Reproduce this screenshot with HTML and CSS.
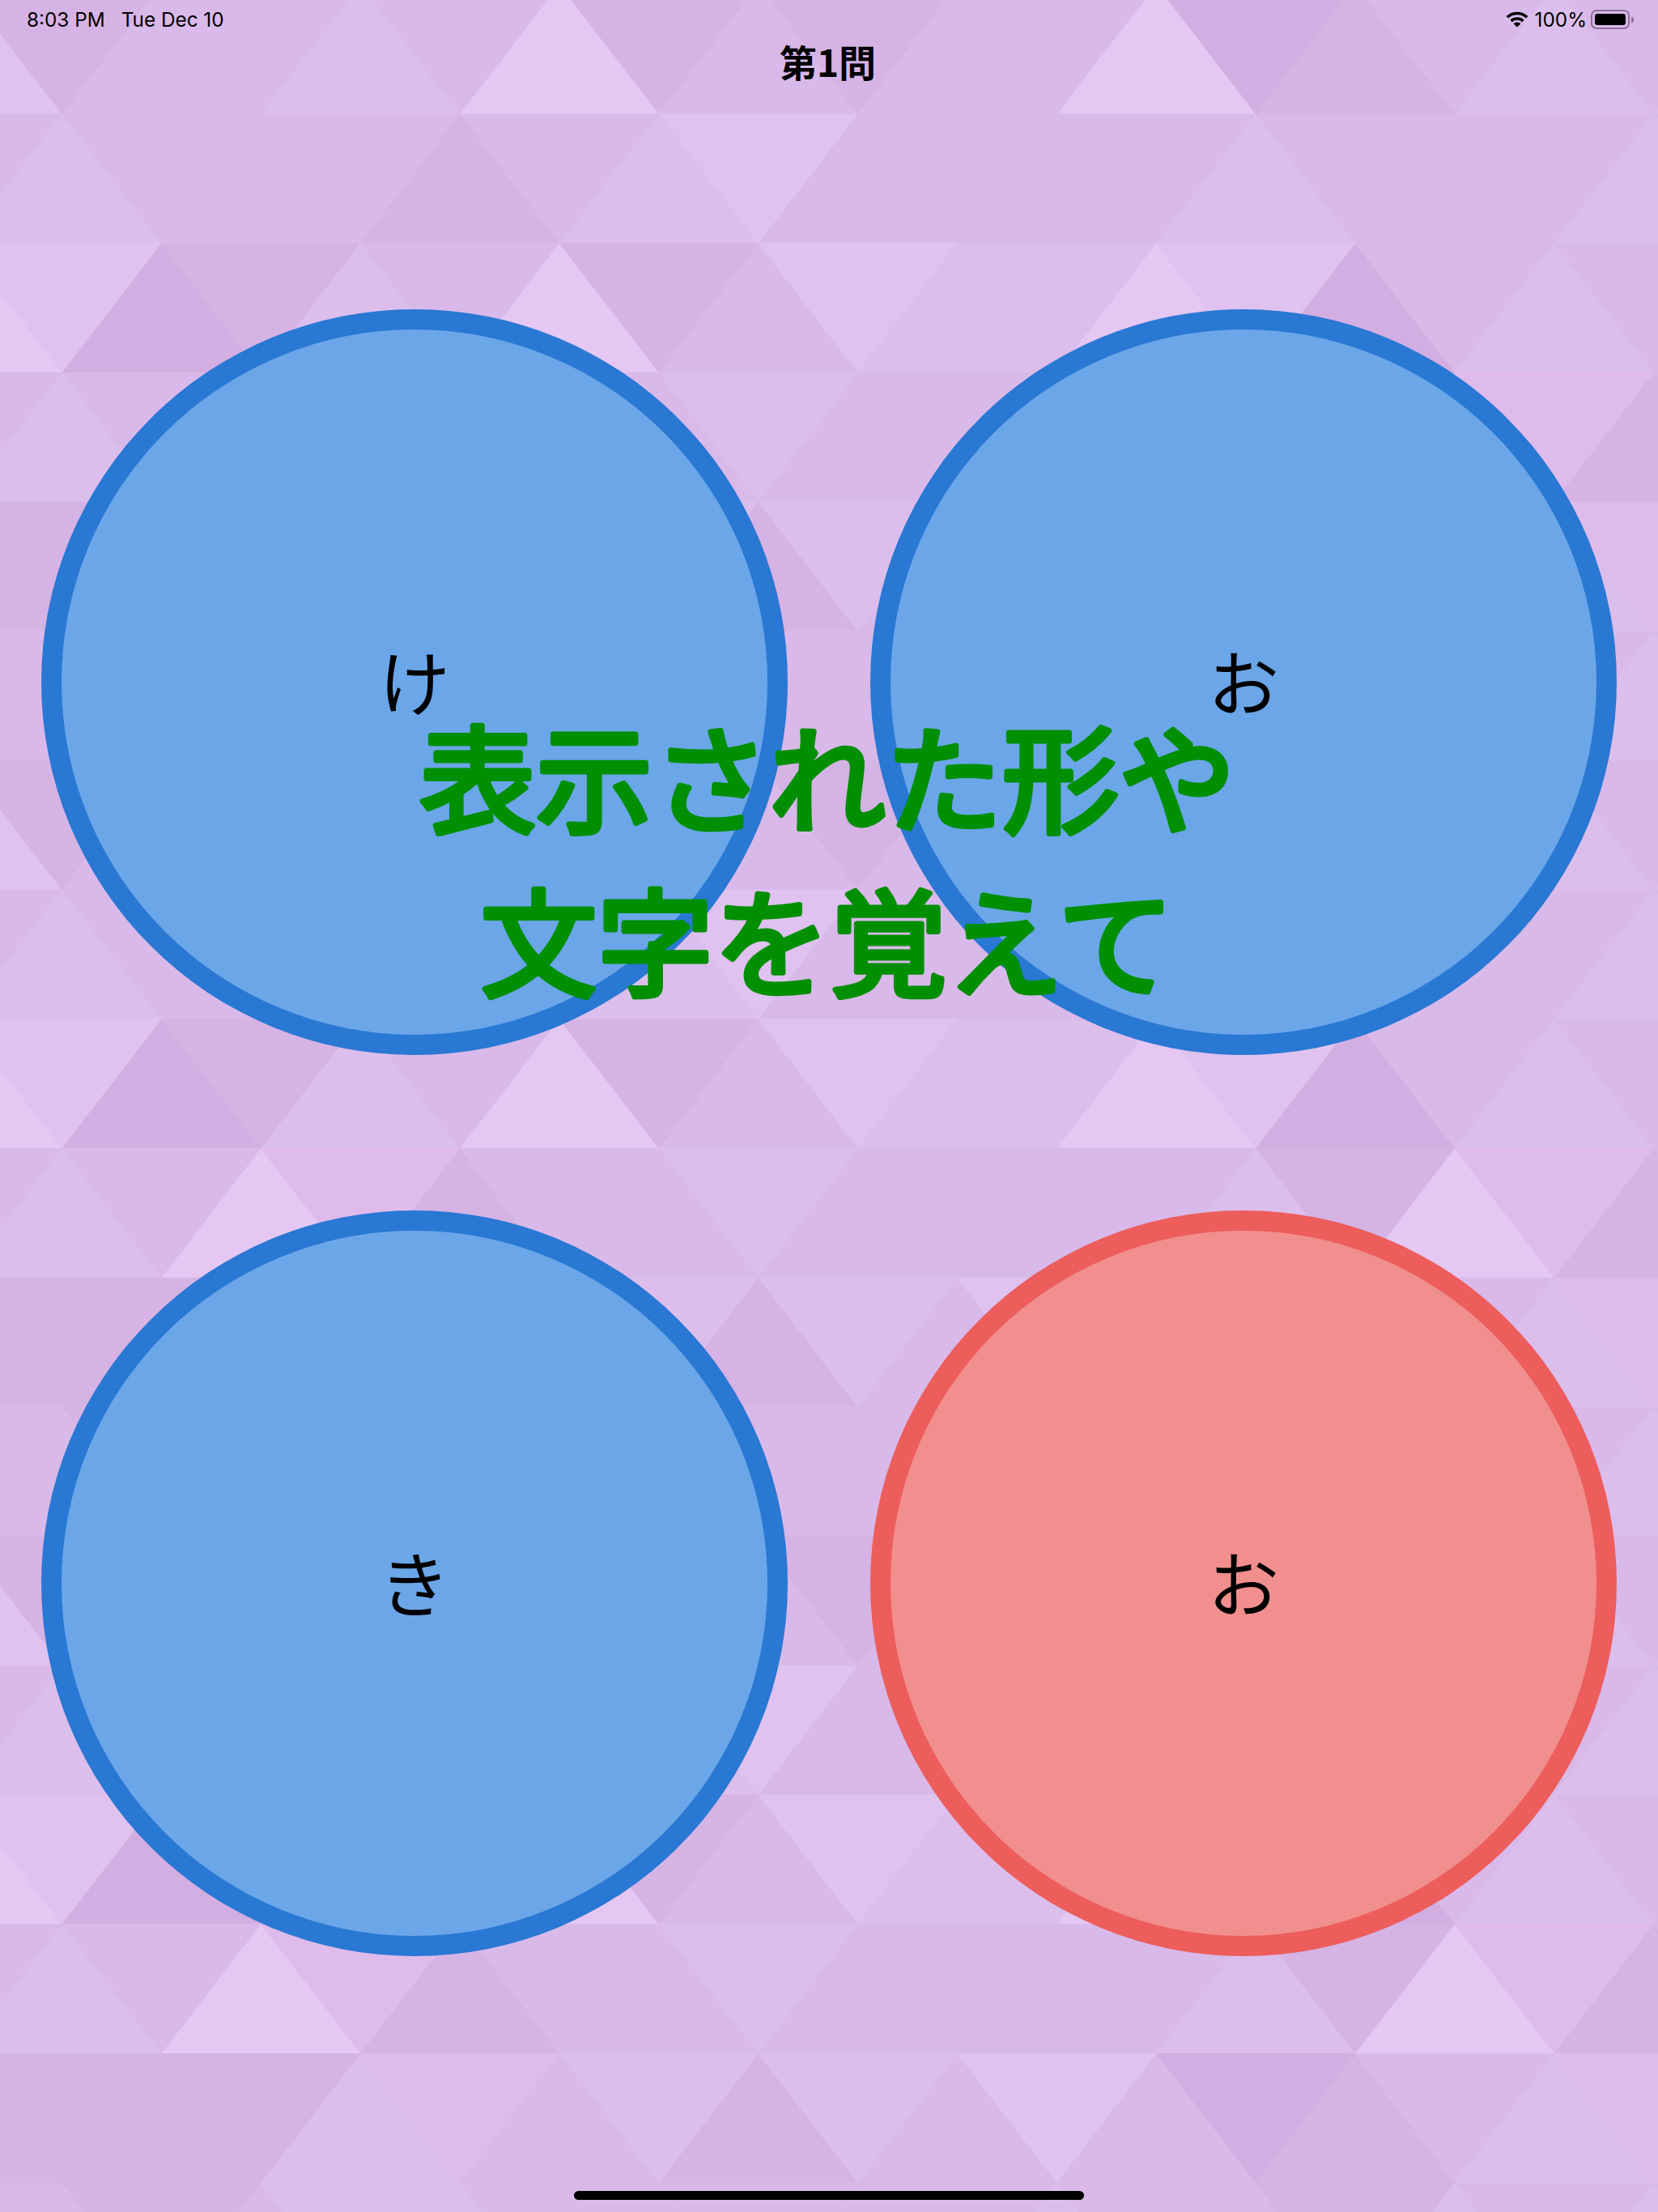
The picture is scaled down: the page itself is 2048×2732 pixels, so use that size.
FILE: index.html
```html
<!DOCTYPE html>
<html lang="ja">
<head>
<meta charset="utf-8">
<title>第1問</title>
<link rel="stylesheet" href="styles.css">
</head>
<body>
<div class="screen">
  <svg class="mosaic" id="mosaic" viewBox="0 0 2048 2732" width="2048" height="2732" aria-hidden="true"></svg>
  <header class="status">
    <div class="status-left"><span>8:03 PM</span><span>Tue Dec 10</span></div>
    <div class="status-right">
      <svg class="wifi" viewBox="0 0 28 20" width="28" height="20" aria-hidden="true">
        <path class="wifi-arc" d="M1.8 7.2C8.6 .9 19.4 .9 26.2 7.2"/>
        <path class="wifi-arc" d="M6.6 11.8C10.8 8 17.2 8 21.4 11.8"/>
        <path class="wifi-dot" d="M14 19.5L9.6 15.2C12 13 16 13 18.4 15.2Z"/>
      </svg>
      <span class="percent">100%</span>
      <div class="battery"><div class="battery-level"></div></div>
      <div class="battery-nub"></div>
    </div>
  </header>
  <h1 class="title">第1問</h1>
  <main class="answers">
    <button class="answer"><span class="answer-label">け</span></button>
    <button class="answer"><span class="answer-label">お</span></button>
    <button class="answer"><span class="answer-label">き</span></button>
    <button class="answer answer-picked"><span class="answer-label">お</span></button>
  </main>
  <svg class="prompt" viewBox="0 0 2048 420" width="2048" height="420">
    <text class="prompt-text" x="1022" y="158">表示された形や</text>
    <text class="prompt-text" x="1022" y="360">文字を覚えて</text>
  </svg>
  <div class="home-bar"></div>
</div>
<script src="bg.js"></script>
</body>
</html>
```

FILE: styles.css
```css
* { box-sizing: border-box; }
html, body { margin: 0; padding: 0; }
body { background: #d9b9ea; font-family: "Noto Sans CJK JP", "Noto Sans", sans-serif; color: #000; }
.screen { position: relative; width: 2048px; height: 2732px; overflow: hidden; display: flex; flex-direction: column; }
.mosaic { position: absolute; left: 0; top: 0; }
.status { position: relative; display: flex; justify-content: space-between; align-items: center; height: 24px; margin-top: 12px; padding: 0 30px 0 33px; font-family: Inter, "Liberation Sans", sans-serif; font-size: 24.3px; line-height: 24px; }
.status-left { display: flex; gap: 20px; }
.status-right { display: flex; align-items: center; }
.wifi { display: block; margin-right: 8px; }
.wifi-arc { fill: none; stroke: #000; stroke-width: 3.6; }
.wifi-dot { fill: #000; }
.percent { margin-right: 5px; }
.battery { width: 48px; height: 24px; padding: 3px; border: 2px solid #8d6f95; border-radius: 7px; }
.battery-level { width: 100%; height: 100%; background: #000; border-radius: 3px; }
.battery-nub { width: 3px; height: 7px; margin-left: 2px; background: #8d6f95; border-radius: 0 3px 3px 0; }
.title { position: relative; margin: 13px 0 0; padding-right: 3px; height: 55px; text-align: center; font-size: 46px; line-height: 52px; font-weight: 700; }
.answers { position: relative; display: grid; grid-template-columns: 922px 922px; grid-auto-rows: 921px; column-gap: 102px; row-gap: 192px; margin-top: 278px; padding-left: 51px; }
.answer { display: flex; align-items: center; justify-content: center; width: 922px; height: 921px; padding: 0 0 8px; border: 25px solid #2978d3; border-radius: 50%; background: #6ba6e9; color: #000; font-family: "Noto Sans CJK JP", sans-serif; font-size: 88px; line-height: 1; font-weight: 400; }
.answer-picked { border-color: #ec5d5c; background: #f18f8e; }
.prompt { position: absolute; left: 0; top: 860px; overflow: visible; }
.prompt-text { text-anchor: middle; font-size: 144px; font-weight: 400; fill: #008f00; stroke: #008f00; stroke-width: 7px; stroke-linejoin: round; stroke-linecap: round; }
.home-bar { position: absolute; left: 709px; top: 2706px; width: 630px; height: 11px; background: #000; border-radius: 6px; }
```

FILE: bg.js
```js
// Low-contrast triangle mosaic behind the quiz; six rows repeat down the page.
(function () {
  var SHADES = { a: '#e4c7f3', b: '#dfc2f0', c: '#dcbeed', d: '#d9b9ea', e: '#d6b3e5', f: '#d2aee2', g: '#dfbbeb' };
  var ROWS = [
    'dcdddedcbddddcdddcd',
    'abfecdaedbccabfdcdd',
    'dcdageddcddddceaged',
    'eeeecgdcecdbdfedcgc',
    'ddedccdddddcddecdcd',
    'beddcdaededdafedcdc'
  ];
  var STEP = 122.88, ROW_H = 159.7, X0 = 77, Y0 = 141;
  var svg = document.getElementById('mosaic');
  for (var n = -1; n < 17; n++) {
    var row = ROWS[((n % 6) + 6) % 6];
    var rowTop = Y0 + n * ROW_H, rowBottom = rowTop + ROW_H;
    for (var j = -1; j <= 17; j++) {
      var x = X0 + j * STEP;
      var up = ((j + n) % 2 + 2) % 2 === 0;
      var apexY = up ? rowTop : rowBottom, baseY = up ? rowBottom : rowTop;
      var p = document.createElementNS('http://www.w3.org/2000/svg', 'polygon');
      p.setAttribute('points', x + ',' + apexY + ' ' + (x - STEP) + ',' + baseY + ' ' + (x + STEP) + ',' + baseY);
      var c = SHADES[row.charAt(j + 1)];
      p.setAttribute('fill', c);
      p.setAttribute('stroke', c);
      svg.appendChild(p);
    }
  }
})();
```
